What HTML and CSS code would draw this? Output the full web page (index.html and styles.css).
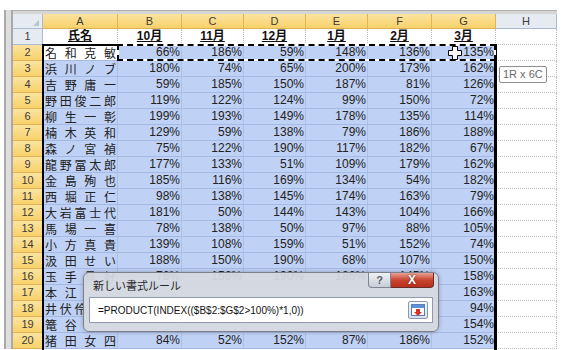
FILE: index.html
```html
<!DOCTYPE html>
<html lang="ja">
<head>
    <meta charset="UTF-8">
    <title>条件付き書式 - 新しい書式ルール</title>
    <link rel="stylesheet" href="styles.css">
</head>
<body>
    <!-- Worksheet -->
    <div class="window">
        <div class="split-bar"></div>
        <div class="sheet">
            <div class="top-bar"></div>

            <!-- Column headers -->
            <div class="row head-row">
                <div class="corner"></div>
                <div class="hd on">A</div>
                <div class="hd on">B</div>
                <div class="hd on">C</div>
                <div class="hd on">D</div>
                <div class="hd on">E</div>
                <div class="hd on">F</div>
                <div class="hd on">G</div>
                <div class="hd">H</div>
            </div>

            <div class="row">
                <div class="rh">1</div>
                <div class="c title">氏名</div>
                <div class="c title">10月</div>
                <div class="c title">11月</div>
                <div class="c title">12月</div>
                <div class="c title">1月</div>
                <div class="c title">2月</div>
                <div class="c title">3月</div>
                <div class="c"></div>
            </div>

            <div class="row">
                <div class="rh on">2</div>
                <div class="c name active"><span>名</span><span>和</span><span>克</span><span>敏</span></div>
                <div class="c sel num">66%</div><div class="c sel num">186%</div><div class="c sel num">59%</div><div class="c sel num">148%</div><div class="c sel num">136%</div><div class="c sel num">135%</div>
                <div class="c"></div>
            </div>
            <div class="row">
                <div class="rh on">3</div>
                <div class="c sel name"><span>浜</span><span>川</span><span>ノ</span><span>ブ</span></div>
                <div class="c sel num">180%</div><div class="c sel num">74%</div><div class="c sel num">65%</div><div class="c sel num">200%</div><div class="c sel num">173%</div><div class="c sel num">162%</div>
                <div class="c"></div>
            </div>
            <div class="row">
                <div class="rh on">4</div>
                <div class="c sel name"><span>吉</span><span>野</span><span>庸</span><span>一</span></div>
                <div class="c sel num">59%</div><div class="c sel num">185%</div><div class="c sel num">150%</div><div class="c sel num">187%</div><div class="c sel num">81%</div><div class="c sel num">126%</div>
                <div class="c"></div>
            </div>
            <div class="row">
                <div class="rh on">5</div>
                <div class="c sel name"><span>野</span><span>田</span><span>俊</span><span>二</span><span>郎</span></div>
                <div class="c sel num">119%</div><div class="c sel num">122%</div><div class="c sel num">124%</div><div class="c sel num">99%</div><div class="c sel num">150%</div><div class="c sel num">72%</div>
                <div class="c"></div>
            </div>
            <div class="row">
                <div class="rh on">6</div>
                <div class="c sel name"><span>柳</span><span>生</span><span>一</span><span>彰</span></div>
                <div class="c sel num">199%</div><div class="c sel num">193%</div><div class="c sel num">149%</div><div class="c sel num">178%</div><div class="c sel num">135%</div><div class="c sel num">114%</div>
                <div class="c"></div>
            </div>
            <div class="row">
                <div class="rh on">7</div>
                <div class="c sel name"><span>楠</span><span>木</span><span>英</span><span>和</span></div>
                <div class="c sel num">129%</div><div class="c sel num">59%</div><div class="c sel num">138%</div><div class="c sel num">79%</div><div class="c sel num">186%</div><div class="c sel num">188%</div>
                <div class="c"></div>
            </div>
            <div class="row">
                <div class="rh on">8</div>
                <div class="c sel name"><span>森</span><span>ノ</span><span>宮</span><span>禎</span></div>
                <div class="c sel num">75%</div><div class="c sel num">122%</div><div class="c sel num">190%</div><div class="c sel num">117%</div><div class="c sel num">182%</div><div class="c sel num">67%</div>
                <div class="c"></div>
            </div>
            <div class="row">
                <div class="rh on">9</div>
                <div class="c sel name"><span>龍</span><span>野</span><span>冨</span><span>太</span><span>郎</span></div>
                <div class="c sel num">177%</div><div class="c sel num">133%</div><div class="c sel num">51%</div><div class="c sel num">109%</div><div class="c sel num">179%</div><div class="c sel num">162%</div>
                <div class="c"></div>
            </div>
            <div class="row">
                <div class="rh on">10</div>
                <div class="c sel name"><span>金</span><span>島</span><span>殉</span><span>也</span></div>
                <div class="c sel num">185%</div><div class="c sel num">116%</div><div class="c sel num">169%</div><div class="c sel num">134%</div><div class="c sel num">54%</div><div class="c sel num">182%</div>
                <div class="c"></div>
            </div>
            <div class="row">
                <div class="rh on">11</div>
                <div class="c sel name"><span>西</span><span>堀</span><span>正</span><span>仁</span></div>
                <div class="c sel num">98%</div><div class="c sel num">138%</div><div class="c sel num">145%</div><div class="c sel num">174%</div><div class="c sel num">163%</div><div class="c sel num">79%</div>
                <div class="c"></div>
            </div>
            <div class="row">
                <div class="rh on">12</div>
                <div class="c sel name"><span>大</span><span>岩</span><span>富</span><span>士</span><span>代</span></div>
                <div class="c sel num">181%</div><div class="c sel num">50%</div><div class="c sel num">144%</div><div class="c sel num">143%</div><div class="c sel num">104%</div><div class="c sel num">166%</div>
                <div class="c"></div>
            </div>
            <div class="row">
                <div class="rh on">13</div>
                <div class="c sel name"><span>馬</span><span>場</span><span>一</span><span>喜</span></div>
                <div class="c sel num">78%</div><div class="c sel num">138%</div><div class="c sel num">50%</div><div class="c sel num">97%</div><div class="c sel num">88%</div><div class="c sel num">105%</div>
                <div class="c"></div>
            </div>
            <div class="row">
                <div class="rh on">14</div>
                <div class="c sel name"><span>小</span><span>方</span><span>真</span><span>貴</span></div>
                <div class="c sel num">139%</div><div class="c sel num">108%</div><div class="c sel num">159%</div><div class="c sel num">51%</div><div class="c sel num">152%</div><div class="c sel num">74%</div>
                <div class="c"></div>
            </div>
            <div class="row">
                <div class="rh on">15</div>
                <div class="c sel name"><span>汲</span><span>田</span><span>せ</span><span>い</span></div>
                <div class="c sel num">188%</div><div class="c sel num">150%</div><div class="c sel num">190%</div><div class="c sel num">68%</div><div class="c sel num">107%</div><div class="c sel num">150%</div>
                <div class="c"></div>
            </div>
            <div class="row">
                <div class="rh on">16</div>
                <div class="c sel name"><span>玉</span><span>手</span><span>具</span><span>好</span></div>
                <div class="c sel num">76%</div><div class="c sel num">156%</div><div class="c sel num">190%</div><div class="c sel num">186%</div><div class="c sel num">145%</div><div class="c sel num">158%</div>
                <div class="c"></div>
            </div>
            <!-- rows 17-19: B..F are hidden under the dialog -->
            <div class="row">
                <div class="rh on">17</div>
                <div class="c sel name"><span>本</span><span>江</span><span class="under">清</span><span class="under">美</span></div>
                <div class="c sel num"></div><div class="c sel num"></div><div class="c sel num"></div><div class="c sel num"></div><div class="c sel num"></div><div class="c sel num">163%</div>
                <div class="c"></div>
            </div>
            <div class="row">
                <div class="rh on">18</div>
                <div class="c sel name"><span>井</span><span>伏</span><span>伶</span><span class="under">太</span><span class="under">郎</span></div>
                <div class="c sel num"></div><div class="c sel num"></div><div class="c sel num"></div><div class="c sel num"></div><div class="c sel num"></div><div class="c sel num">94%</div>
                <div class="c"></div>
            </div>
            <div class="row">
                <div class="rh on">19</div>
                <div class="c sel name"><span>篭</span><span>谷</span><span class="under">和</span><span class="under">夫</span></div>
                <div class="c sel num"></div><div class="c sel num"></div><div class="c sel num"></div><div class="c sel num"></div><div class="c sel num"></div><div class="c sel num">154%</div>
                <div class="c"></div>
            </div>
            <div class="row">
                <div class="rh on">20</div>
                <div class="c sel name"><span>猪</span><span>田</span><span>女</span><span>四</span></div>
                <div class="c sel num">84%</div><div class="c sel num">52%</div><div class="c sel num">152%</div><div class="c sel num">87%</div><div class="c sel num">186%</div><div class="c sel num">152%</div>
                <div class="c"></div>
            </div>
        </div>
    </div>

    <!-- Selection border and copy marquee -->
    <div class="selection"></div>
    <div class="ants"></div>

    <!-- Fill cursor -->
    <svg class="cursor" width="14" height="14" viewBox="0 0 14 14">
        <path d="M4.5 0.5h5v4h4v5h-4v4h-5v-4h-4v-5h4z" fill="#fff" stroke="#000" stroke-width="1"/>
    </svg>

    <!-- Range size tip -->
    <div class="size-tip">1R x 6C</div>

    <!-- New formatting rule dialog -->
    <div class="dialog">
        <div class="dialog-title">
            <span>新しい書式ルール</span>
            <div class="caption-btns">
                <div class="btn-help">?</div>
                <div class="btn-close">X</div>
            </div>
        </div>
        <div class="dialog-body">
            <span class="formula">=PRODUCT(INDEX(($B$2:$G$2&gt;100%)*1,0))</span>
            <div class="collapse-btn">
                <svg width="14" height="13" viewBox="0 0 14 13">
                    <rect x="0.5" y="0.5" width="13" height="11" fill="#fff" stroke="#5b7fb8"/>
                    <rect x="1" y="1" width="12" height="3" fill="#5b8fd8"/>
                    <path d="M5 5h4v3h2l-4 4-4-4h2z" fill="#d8312a"/>
                </svg>
            </div>
        </div>
    </div>
</body>
</html>
```

FILE: styles.css
```css
/* Page */
body {
    margin: 0;
    width: 567px;
    height: 350px;
    overflow: hidden;
    position: relative;
    background: #fff;
    font-family: "Liberation Sans", "Noto Sans CJK JP", sans-serif;
    color: #222;
}

/* Sheet frame */
.window {
    display: flex;
    margin: 10px 0 0 4px;
}

.split-bar {
    width: 5px;
    border-left: 2px solid #a9a9a9;
    border-right: 2px solid #a9a9a9;
    background: #dedede;
}

.sheet {
    display: flex;
    flex-direction: column;
}

.top-bar {
    height: 4px;
    box-sizing: border-box;
    border-top: 1px solid #b0b0b0;
    background: #d6d6d6;
}

/* Grid rows */
.row {
    display: grid;
    grid-template-columns: 30px 75px 64px 62px 62px 62px 64px 64px 61px;
    height: 16px;
}

.head-row {
    height: 15px;
}

/* Headers */
.corner,
.hd,
.rh {
    box-sizing: border-box;
    font-size: 11px;
    line-height: 15px;
    text-align: center;
    color: #3c3c3c;
    background: #e6ebf2;
    border-right: 1px solid #a9bcd3;
    border-bottom: 1px solid #a9bcd3;
}

.hd {
    line-height: 14px;
}

.corner {
    position: relative;
}

.corner::after {
    content: '';
    position: absolute;
    right: 3px;
    bottom: 2px;
    border-left: 6px solid transparent;
    border-bottom: 6px solid #b9c3cf;
}

.hd.on,
.rh.on {
    background: linear-gradient(#fbe3a0, #f8d16a);
    border-color: #e0b452;
}

/* Cells */
.c {
    box-sizing: border-box;
    font-size: 12px;
    line-height: 15px;
    padding: 0 2px;
    white-space: nowrap;
    overflow: hidden;
    border-right: 1px dotted #b7bcc6;
    border-bottom: 1px dotted #b7bcc6;
}

.title {
    font-weight: bold;
    text-align: center;
    text-decoration: underline;
    color: #111;
}

.sel {
    background: #bfd1f5;
    border-right: 1px solid #abc0e7;
    border-bottom: 1px solid #a5bae3;
}

.active {
    background: #fff;
    border-right: 1px solid #abc0e7;
    border-bottom: 1px solid #a5bae3;
}

.num {
    text-align: right;
    padding-right: 1px;
}

.name {
    display: flex;
    justify-content: space-between;
    padding: 0 1px 0 2px;
    font-family: "Noto Sans CJK JP", sans-serif;
}

/* characters that sit under the dialog keep their place but are not painted */
.under {
    visibility: hidden;
}

/* Selection overlays */
.selection {
    position: absolute;
    left: 42px;
    top: 44px;
    width: 455px;
    height: 320px;
    box-sizing: border-box;
    border: 2px solid #000;
    border-right-width: 3px;
}

.ants {
    position: absolute;
    left: 117px;
    top: 44px;
    width: 379px;
    height: 17px;
    box-sizing: border-box;
    border: 2px solid #fff;
}

.ants::after {
    content: '';
    position: absolute;
    inset: -2px;
    border: 2px dashed #000;
}

.cursor {
    position: absolute;
    left: 448px;
    top: 46px;
}

.size-tip {
    position: absolute;
    left: 499px;
    top: 66px;
    padding: 0 3px;
    height: 15px;
    line-height: 15px;
    font-size: 11px;
    color: #6a6a6a;
    background: #fff;
    border: 1px solid #8e8e8e;
    border-radius: 2px;
}

/* Dialog */
.dialog {
    position: absolute;
    left: 83px;
    top: 272px;
    width: 356px;
    box-sizing: border-box;
    padding: 0 5px 8px;
    border: 1px solid #7c8089;
    border-radius: 6px;
    background: rgba(214, 217, 224, 0.94);
    box-shadow: 0 0 4px rgba(0, 0, 0, 0.25);
}

.dialog-title {
    position: relative;
    height: 24px;
    line-height: 25px;
    padding-left: 4px;
    font-family: "Noto Sans CJK JP", sans-serif;
    font-size: 11px;
    color: #2a2a2a;
}

.caption-btns {
    position: absolute;
    top: 0;
    right: -1px;
    display: flex;
    height: 15px;
}

.btn-help,
.btn-close {
    box-sizing: border-box;
    height: 15px;
    line-height: 14px;
    text-align: center;
    font-family: "Liberation Sans", sans-serif;
    font-weight: bold;
}

.btn-help {
    width: 23px;
    font-size: 11px;
    color: #5a5f68;
    background: linear-gradient(#eef0f3, #c8ced7);
    border: 1px solid #7e858f;
    border-top: none;
    border-radius: 0 0 0 4px;
}

.btn-close {
    width: 43px;
    font-size: 12px;
    color: #fff;
    text-shadow: 0 0 2px #5a1a12;
    background: linear-gradient(#e8a294, #c9452f 50%, #b8301e);
    border: 1px solid #6e2a22;
    border-top: none;
    border-left: none;
    border-radius: 0 0 4px 0;
}

.dialog-body {
    display: flex;
    align-items: center;
    justify-content: space-between;
    height: 26px;
    box-sizing: border-box;
    padding: 0 4px 0 8px;
    background: #fff;
    border: 1px solid #8f9bac;
}

.formula {
    font-size: 10px;
    color: #111;
}

.collapse-btn {
    width: 20px;
    height: 18px;
    box-sizing: border-box;
    display: flex;
    align-items: center;
    justify-content: center;
    border: 1px solid #8a98ae;
    border-radius: 2px;
    background: linear-gradient(#f6f8fb, #d9e0ea);
}
```
